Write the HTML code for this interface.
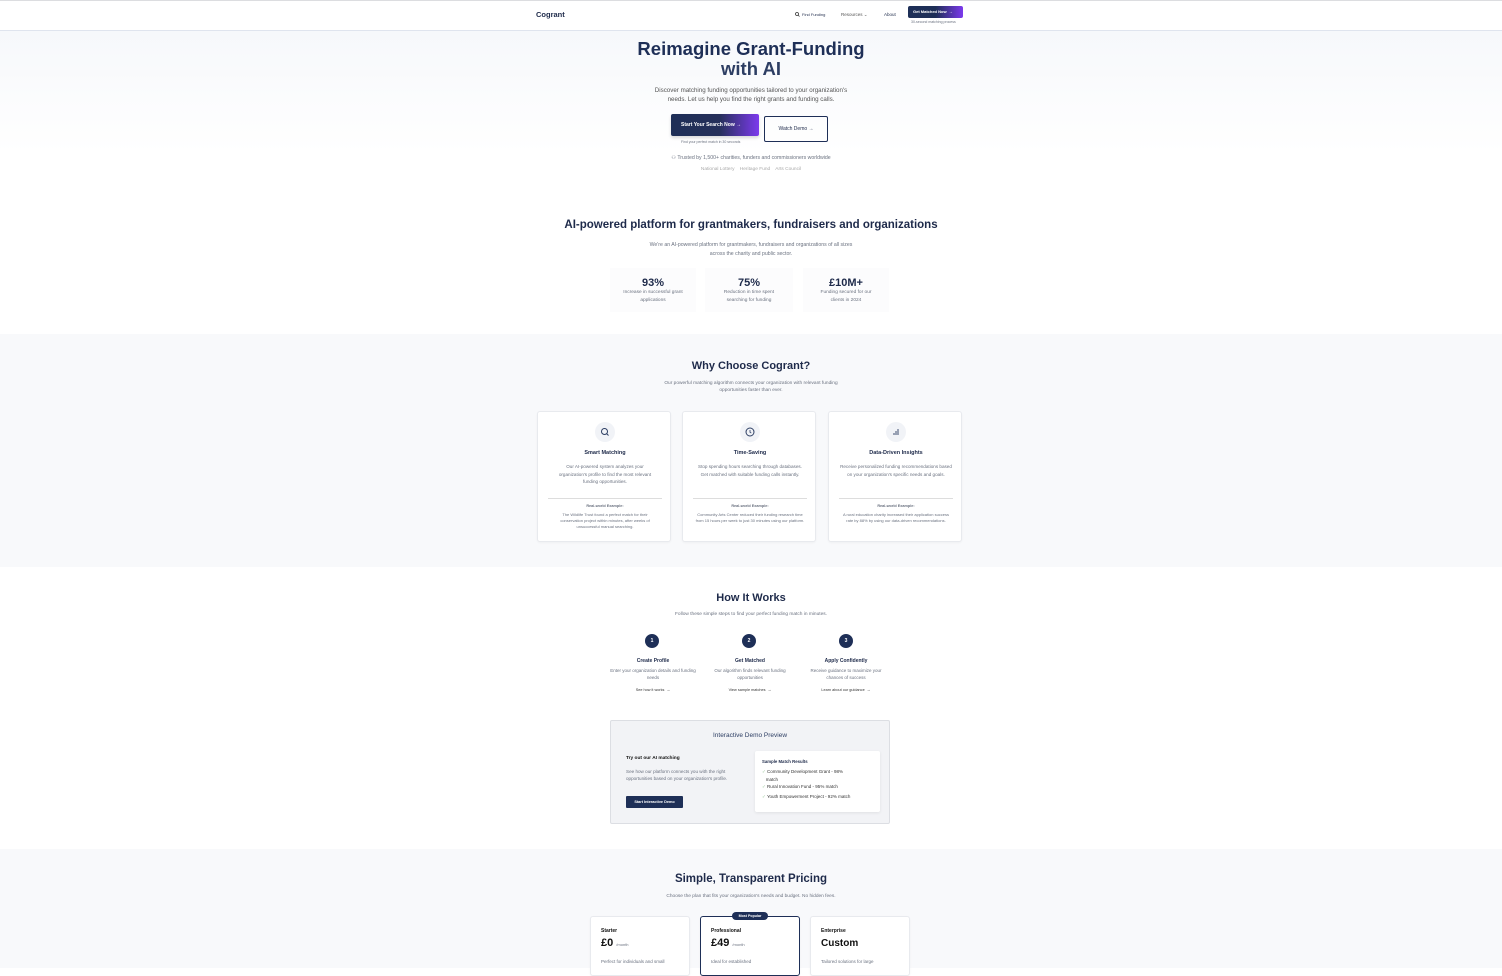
<!DOCTYPE html>
<html><head><meta charset="utf-8"><style>
*{margin:0;padding:0;box-sizing:border-box}
body{width:1502px;height:968px;overflow:hidden;background:#fff;font-family:"Liberation Sans",sans-serif;color:#1e2a4a;position:relative}
.a{position:absolute}
.c{position:absolute;left:0;width:1502px;text-align:center}
.g{color:#6b7280}
.b{font-weight:bold}
.card{position:absolute;background:#fff;border:1px solid #e8eaee;border-radius:3px;box-shadow:0 1px 2px rgba(0,0,0,.04)}
.ic{position:absolute;width:20px;height:20px;border-radius:50%;background:#f1f3f7;left:57px;top:10px}
.num{position:absolute;width:14px;height:14px;border-radius:50%;background:#1e2f57;color:#fff;font-size:5px;font-weight:bold;text-align:center;line-height:14px}
.t{text-align:center}
</style></head><body>
<div class="a" style="left:0;top:0;width:1502px;height:1px;background:#dcdde0"></div>
<div class="a" style="left:0;top:31px;width:1502px;height:304px;background:linear-gradient(#f6f8fb,#fff 40%)"></div>
<div class="a" style="left:0;top:30px;width:1502px;height:1px;background:#dfe4ee"></div>
<div class="a b" style="left:536px;top:10px;font-size:7.5px">Cogrant</div>
<svg class="a" style="left:795px;top:12px" width="5" height="5" viewBox="0 0 10 10"><circle cx="4" cy="4" r="3" fill="none" stroke="#333" stroke-width="1.5"/><path d="M6.5 6.5L9 9" stroke="#333" stroke-width="1.5"/></svg>
<div class="a" style="left:802px;top:12px;font-size:4px">Find Funding</div>
<div class="a g" style="left:841px;top:12px;font-size:4.5px;color:#555">Resources ⌄</div>
<div class="a" style="left:884px;top:12px;font-size:4.5px">About</div>
<div class="a" style="left:908px;top:6px;width:55px;height:12px;border-radius:2px;background:linear-gradient(90deg,#1e2f57,#1e2f57 50%,#7c3aed);color:#fff;font-size:4px;font-weight:bold;line-height:12px;padding-left:5px">Get Matched Now &nbsp;→</div>
<div class="a g" style="left:911px;top:20px;font-size:3.5px">30-second matching process</div>

<div class="c b" style="top:39px;font-size:18.5px;line-height:19.5px;color:#1e2f57">Reimagine Grant-Funding<br><span style="color:#2d3e63">with AI</span></div>
<div class="c g" style="top:86px;font-size:6.2px;line-height:9px;color:#555">Discover matching funding opportunities tailored to your organization's<br>needs. Let us help you find the right grants and funding calls.</div>
<div class="a" style="left:671px;top:114px;width:88px;height:22px;border-radius:2px;background:linear-gradient(90deg,#1e2f57,#26305a 55%,#7c3aed);color:#fff;font-size:5px;font-weight:bold;line-height:22px;padding-left:10px;box-shadow:0 2px 3px rgba(0,0,0,.15)">Start Your Search Now →</div>
<div class="a" style="left:764px;top:116px;width:64px;height:26px;border:1px solid #1e2f57;border-radius:2px;font-size:5px;line-height:24px;text-align:center">Watch Demo →</div>
<div class="a g" style="left:681px;top:140px;font-size:3.5px">Find your perfect match in 30 seconds</div>
<div class="c g" style="top:155px;font-size:5.2px">⚇ Trusted by 1,500+ charities, funders and commissioners worldwide</div>
<div class="c" style="top:167px;font-size:4.8px;color:#aaa">National Lottery &nbsp;&nbsp; Heritage Fund &nbsp;&nbsp; Arts Council</div>

<div class="c b" style="top:219px;font-size:11.5px">AI-powered platform for grantmakers, fundraisers and organizations</div>
<div class="c g" style="top:241px;font-size:5.2px;line-height:9px">We're an AI-powered platform for grantmakers, fundraisers and organizations of all sizes<br>across the charity and public sector.</div>
<div class="a t" style="left:610px;top:268px;width:86px;height:44px;background:#fcfcfd"><div class="b" style="font-size:11px;margin-top:9px">93%</div><div class="g" style="font-size:4.8px;line-height:8px">Increase in successful grant<br>applications</div></div>
<div class="a t" style="left:705px;top:268px;width:88px;height:44px;background:#fcfcfd"><div class="b" style="font-size:11px;margin-top:9px">75%</div><div class="g" style="font-size:4.8px;line-height:8px">Reduction in time spent<br>searching for funding</div></div>
<div class="a t" style="left:803px;top:268px;width:86px;height:44px;background:#fcfcfd"><div class="b" style="font-size:11px;margin-top:9px">£10M+</div><div class="g" style="font-size:4.8px;line-height:8px">Funding secured for our<br>clients in 2024</div></div>

<div class="a" style="left:0;top:334px;width:1502px;height:233px;background:#f8f9fb"></div>
<div class="c b" style="top:360px;font-size:11px">Why Choose Cogrant?</div>
<div class="c g" style="top:380px;font-size:4.8px;line-height:7px">Our powerful matching algorithm connects your organization with relevant funding<br>opportunities faster than ever.</div>

<div class="card" style="left:537px;top:411px;width:134px;height:131px"><div class="ic"><svg width="20" height="20" viewBox="0 0 20 20"><circle cx="9.5" cy="9.5" r="3" fill="none" stroke="#2d3e63" stroke-width="1"/><path d="M11.7 11.7L13.5 13.5" stroke="#2d3e63"/></svg></div>
<div class="a t b" style="left:0;width:134px;top:38px;font-size:5.5px">Smart Matching</div>
<div class="a t g" style="left:14px;width:106px;top:51px;font-size:4.6px;line-height:7.5px">Our AI-powered system analyzes your organization's profile to find the most relevant funding opportunities.</div>
<div class="a" style="left:10px;top:86px;width:114px;height:1px;background:#ddd"></div>
<div class="a t b g" style="left:0;width:134px;top:92px;font-size:3.8px">Real-world Example:</div>
<div class="a t g" style="left:14px;width:106px;top:100px;font-size:4px;line-height:6px">The Wildlife Trust found a perfect match for their conservation project within minutes, after weeks of unsuccessful manual searching.</div></div>

<div class="card" style="left:682px;top:411px;width:134px;height:131px"><div class="ic"><svg width="20" height="20" viewBox="0 0 20 20"><circle cx="10" cy="10" r="4" fill="none" stroke="#2d3e63" stroke-width="1"/><path d="M10 8V10.3L11.3 11" stroke="#2d3e63" stroke-width=".8" fill="none"/></svg></div>
<div class="a t b" style="left:0;width:134px;top:38px;font-size:5.5px">Time-Saving</div>
<div class="a t g" style="left:12px;width:110px;top:51px;font-size:4.6px;line-height:7.5px">Stop spending hours searching through databases. Get matched with suitable funding calls instantly.</div>
<div class="a" style="left:10px;top:86px;width:114px;height:1px;background:#ddd"></div>
<div class="a t b g" style="left:0;width:134px;top:92px;font-size:3.8px">Real-world Example:</div>
<div class="a t g" style="left:10px;width:114px;top:100px;font-size:4px;line-height:6px">Community Arts Center reduced their funding research time from 15 hours per week to just 30 minutes using our platform.</div></div>

<div class="card" style="left:828px;top:411px;width:134px;height:131px"><div class="ic"><svg width="20" height="20" viewBox="0 0 20 20"><path d="M8 13V11M10 13V9M12 13V7" stroke="#2d3e63" stroke-width=".9"/></svg></div>
<div class="a t b" style="left:0;width:134px;top:38px;font-size:5.5px">Data-Driven Insights</div>
<div class="a t g" style="left:8px;width:118px;top:51px;font-size:4.6px;line-height:7.5px">Receive personalized funding recommendations based on your organization's specific needs and goals.</div>
<div class="a" style="left:10px;top:86px;width:114px;height:1px;background:#ddd"></div>
<div class="a t b g" style="left:0;width:134px;top:92px;font-size:3.8px">Real-world Example:</div>
<div class="a t g" style="left:12px;width:110px;top:100px;font-size:4px;line-height:6px">A rural education charity increased their application success rate by 88% by using our data-driven recommendations.</div></div>

<div class="c b" style="top:592px;font-size:11px">How It Works</div>
<div class="c g" style="top:612px;font-size:4.8px">Follow these simple steps to find your perfect funding match in minutes.</div>
<div class="num" style="left:645px;top:634px">1</div>
<div class="num" style="left:742px;top:634px">2</div>
<div class="num" style="left:839px;top:634px">3</div>
<div class="a t" style="left:609px;width:88px;top:658px"><div class="b" style="font-size:5px">Create Profile</div><div class="g" style="font-size:4.5px;line-height:7px;margin-top:3px">Enter your organization details and funding needs</div><div style="font-size:3.8px;margin-top:7px;color:#333">See how it works &nbsp;→</div></div>
<div class="a t" style="left:706px;width:88px;top:658px"><div class="b" style="font-size:5px">Get Matched</div><div class="g" style="font-size:4.5px;line-height:7px;margin-top:3px">Our algorithm finds relevant funding opportunities</div><div style="font-size:3.8px;margin-top:7px;color:#333">View sample matches &nbsp;→</div></div>
<div class="a t" style="left:802px;width:88px;top:658px"><div class="b" style="font-size:5px">Apply Confidently</div><div class="g" style="font-size:4.5px;line-height:7px;margin-top:3px">Receive guidance to maximize your chances of success</div><div style="font-size:3.8px;margin-top:7px;color:#333">Learn about our guidance &nbsp;→</div></div>

<div class="a" style="left:610px;top:720px;width:280px;height:104px;background:#f2f3f6;border:1px solid #dcdee3;border-radius:2px">
<div class="a t" style="left:0;width:278px;top:11px;font-size:6.5px;color:#2d3e63">Interactive Demo Preview</div>
<div class="a b" style="left:15px;top:35px;font-size:4.8px;color:#111">Try out our AI matching</div>
<div class="a g" style="left:15px;top:47px;width:112px;font-size:4.6px;line-height:7px">See how our platform connects you with the right opportunities based on your organization's profile.</div>
<div class="a" style="left:15px;top:75px;width:57px;height:12px;background:#1e2f57;border-radius:1px;color:#fff;font-size:3.8px;font-weight:bold;line-height:12px;text-align:center">Start Interactive Demo</div>
<div class="a" style="left:144px;top:30px;width:125px;height:61px;background:#fff;border-radius:2px;box-shadow:0 1px 3px rgba(0,0,0,.08)">
<div class="a b" style="left:7px;top:8px;font-size:4.3px">Sample Match Results</div>
<div class="a" style="left:7px;top:17px;width:112px;font-size:4.5px;line-height:7.5px;color:#333"><span style="color:#9ac79a">✓</span> Community Development Grant - 98%<br>&nbsp;&nbsp;&nbsp;match<br><span style="color:#9ac79a">✓</span> Rural Innovation Fund - 95% match<br><div style="margin-top:2px"><span style="color:#9ac79a">✓</span> Youth Empowerment Project - 92% match</div></div>
</div></div>

<div class="a" style="left:0;top:849px;width:1502px;height:119px;background:#f8f9fb"></div>
<div class="c b" style="top:873px;font-size:11.5px">Simple, Transparent Pricing</div>
<div class="c g" style="top:894px;font-size:4.8px">Choose the plan that fits your organization's needs and budget. No hidden fees.</div>
<div class="card" style="left:590px;top:916px;width:100px;height:60px"><div class="a b" style="left:10px;top:11px;font-size:5px;color:#111">Starter</div><div class="a b" style="left:10px;top:20px;font-size:11px;color:#111">£0 <span class="g" style="font-size:4px;font-weight:normal">/month</span></div><div class="a g" style="left:10px;top:42px;font-size:4.5px">Perfect for individuals and small</div></div>
<div class="card" style="left:700px;top:916px;width:100px;height:60px;border:1.5px solid #1e2f57"><div class="a b" style="left:10px;top:11px;font-size:5px;color:#111">Professional</div><div class="a b" style="left:10px;top:20px;font-size:11px;color:#111">£49 <span class="g" style="font-size:4px;font-weight:normal">/month</span></div><div class="a g" style="left:10px;top:42px;font-size:4.5px">Ideal for established</div></div>
<div class="a" style="left:732px;top:912px;width:36px;height:8px;border-radius:4px;background:#1e2f57;color:#fff;font-size:3.6px;font-weight:bold;text-align:center;line-height:8px">Most Popular</div>
<div class="card" style="left:810px;top:916px;width:100px;height:60px"><div class="a b" style="left:10px;top:11px;font-size:5px;color:#111">Enterprise</div><div class="a b" style="left:10px;top:21px;font-size:10px;color:#111">Custom</div><div class="a g" style="left:10px;top:42px;font-size:4.5px">Tailored solutions for large</div></div>
</body></html>
